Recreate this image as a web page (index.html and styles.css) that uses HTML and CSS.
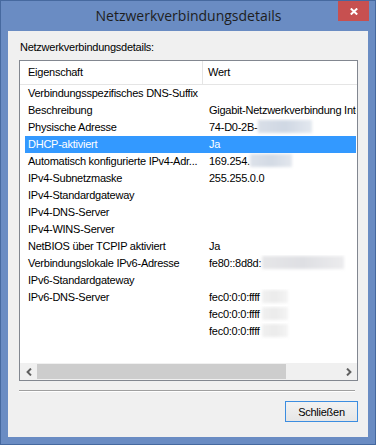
FILE: index.html
```html
<!DOCTYPE html>
<html lang="de">
<head>
<meta charset="utf-8">
<title>Netzwerkverbindungsdetails</title>
<link rel="stylesheet" href="styles.css">
</head>
<body>
<div class="window">
  <div class="titlebar">
    <div class="title">Netzwerkverbindungsdetails</div>
    <div class="close">
      <svg width="8" height="7" viewBox="0 0 8 7"><path d="M0.8 0.5 L7.2 6.5 M7.2 0.5 L0.8 6.5" stroke="#fff" stroke-width="2" fill="none"/></svg>
    </div>
  </div>
  <div class="client">
    <div class="caption">Netzwerkverbindungsdetails:</div>
    <div class="list">
      <div class="header">
        <div class="hcol hcol1">Eigenschaft</div>
        <div class="hcol hcol2">Wert</div>
      </div>
      <div class="rows">
        <div class="row"><div class="c1">Verbindungsspezifisches DNS-Suffix</div><div class="c2"></div></div>
        <div class="row"><div class="c1">Beschreibung</div><div class="c2">Gigabit-Netzwerkverbindung Intel(R) 82579LM</div></div>
        <div class="row"><div class="c1">Physische Adresse</div><div class="c2">74-D0-2B-<span class="blur blur-mac"></span></div></div>
        <div class="row selected"><div class="c1">DHCP-aktiviert</div><div class="c2">Ja</div></div>
        <div class="row"><div class="c1">Automatisch konfigurierte IPv4-Adr...</div><div class="c2">169.254.<span class="blur blur-ip"></span></div></div>
        <div class="row"><div class="c1">IPv4-Subnetzmaske</div><div class="c2">255.255.0.0</div></div>
        <div class="row"><div class="c1">IPv4-Standardgateway</div><div class="c2"></div></div>
        <div class="row"><div class="c1">IPv4-DNS-Server</div><div class="c2"></div></div>
        <div class="row"><div class="c1">IPv4-WINS-Server</div><div class="c2"></div></div>
        <div class="row"><div class="c1">NetBIOS über TCPIP aktiviert</div><div class="c2">Ja</div></div>
        <div class="row"><div class="c1">Verbindungslokale IPv6-Adresse</div><div class="c2">fe80::8d8d:<span class="blur blur-v6"></span></div></div>
        <div class="row"><div class="c1">IPv6-Standardgateway</div><div class="c2"></div></div>
        <div class="row"><div class="c1">IPv6-DNS-Server</div><div class="c2">fec0:0:0:ffff<span class="blur blur-dns"></span></div></div>
        <div class="row"><div class="c1"></div><div class="c2">fec0:0:0:ffff<span class="blur blur-dns"></span></div></div>
        <div class="row"><div class="c1"></div><div class="c2">fec0:0:0:ffff<span class="blur blur-dns"></span></div></div>
      </div>
      <div class="spacer"></div>
      <div class="hscroll">
        <div class="sbtn">
          <svg width="6" height="8" viewBox="0 0 6 8"><polyline points="5,0.6 1.6,4 5,7.4" fill="none" stroke="#606060" stroke-width="2"/></svg>
        </div>
        <div class="track"><div class="thumb"></div></div>
        <div class="sbtn">
          <svg width="6" height="8" viewBox="0 0 6 8"><polyline points="1,0.6 4.4,4 1,7.4" fill="none" stroke="#606060" stroke-width="2"/></svg>
        </div>
      </div>
    </div>
    <div class="separator"></div>
    <div class="buttons">
      <button class="btn" type="button">Schließen</button>
    </div>
  </div>
</div>
</body>
</html>
```
FILE: styles.css
```css
html, body {
  margin: 0;
  padding: 0;
}
body {
  width: 376px;
  height: 445px;
  overflow: hidden;
  font-family: "Liberation Sans", Arial, sans-serif;
  font-size: 11px;
  letter-spacing: -0.25px;
  color: #000;
}
.window {
  box-sizing: border-box;
  width: 376px;
  height: 445px;
  background: #6a8cc3;
  border: 1px solid #46699f;
  padding: 0 7px 7px 7px;
  display: flex;
  flex-direction: column;
}
.titlebar {
  height: 30px;
  display: grid;
  grid-template-columns: 1fr auto 1fr;
  margin: 0 -1px 0 0;
}
.title {
  grid-column: 2;
  align-self: center;
  font-family: "Open Sans", "Noto Sans", sans-serif;
  font-size: 14px;
  letter-spacing: 0;
  line-height: 20px;
  color: #1e1e1e;
  white-space: nowrap;
  margin-top: -1px;
}
.close {
  grid-column: 3;
  justify-self: end;
  align-self: start;
  width: 31px;
  height: 20px;
  background: #c75050;
  display: flex;
  align-items: center;
  justify-content: center;
}
.close svg { display: block; }
.client {
  box-sizing: border-box;
  flex: 1;
  background: #f0f0f0;
  padding: 10px 10px 15px 11px;
  display: flex;
  flex-direction: column;
}
.caption {
  line-height: 13px;
  height: 13px;
  margin-left: 1px;
  white-space: nowrap;
}
.list {
  box-sizing: border-box;
  margin-top: 6px;
  height: 321px;
  border: 1px solid #828790;
  background: #fff;
  display: flex;
  flex-direction: column;
  overflow: hidden;
}
.header {
  box-sizing: border-box;
  height: 24px;
  border-bottom: 1px solid #e5e5e5;
  display: grid;
  grid-template-columns: 183px 1fr;
  flex: none;
}
.hcol {
  box-sizing: border-box;
  line-height: 13px;
  padding-top: 5px;
  white-space: nowrap;
  overflow: hidden;
}
.hcol1 {
  padding-left: 8px;
  border-right: 1px solid #e5e5e5;
}
.hcol2 {
  padding-left: 5px;
}
.rows {
  display: flex;
  flex-direction: column;
  flex: none;
}
.row {
  height: 17px;
  line-height: 17px;
  margin: 0 1px 0 5px;
  display: grid;
  grid-template-columns: 178px 1fr;
  white-space: nowrap;
}
.row.selected {
  background: #3399ff;
  color: #fff;
}
.c1 {
  padding-left: 3px;
  overflow: hidden;
}
.c2 {
  padding-left: 6px;
  overflow: hidden;
}
.blur {
  display: inline-block;
  vertical-align: top;
  height: 13px;
  margin-top: 1px;
  filter: blur(1.5px);
}
.blur-mac {
  width: 54px;
  background: linear-gradient(90deg, #d9dfe8, #cfd7e3 50%, #e3e8ef);
}
.blur-ip {
  width: 42px;
  background: linear-gradient(90deg, #dde2ea, #d3dae4 50%, #e3e7ee);
}
.blur-v6 {
  width: 82px;
  margin-left: 1px;
  background: linear-gradient(90deg, #e6e6e8, #dedfe3 50%, #ececee);
}
.blur-dns {
  width: 26px;
  margin-left: 2px;
  background: linear-gradient(90deg, #f0f0f0, #ebebeb 50%, #f4f4f4);
}
.spacer {
  flex: 1;
}
.hscroll {
  flex: none;
  height: 17px;
  background: #f0f0f0;
  display: flex;
}
.sbtn {
  width: 17px;
  display: flex;
  align-items: center;
  justify-content: center;
}
.sbtn svg { display: block; }
.track {
  flex: 1;
  padding: 1px 0;
  display: flex;
}
.thumb {
  width: 249px;
  background: #cdcdcd;
}
.separator {
  margin: 9px 3px 0 0;
  height: 0;
  border-top: 1px solid #a0a0a0;
  border-bottom: 1px solid #fff;
}
.buttons {
  display: flex;
  justify-content: flex-end;
  margin-top: 9px;
}
.btn {
  box-sizing: border-box;
  width: 73px;
  height: 21px;
  margin: 0;
  padding: 0;
  border: 1px solid #3c8de0;
  background: linear-gradient(#f2f2f2, #e6e6e6);
  font-family: "Liberation Sans", Arial, sans-serif;
  font-size: 11px;
  letter-spacing: -0.25px;
  color: #000;
}
```
